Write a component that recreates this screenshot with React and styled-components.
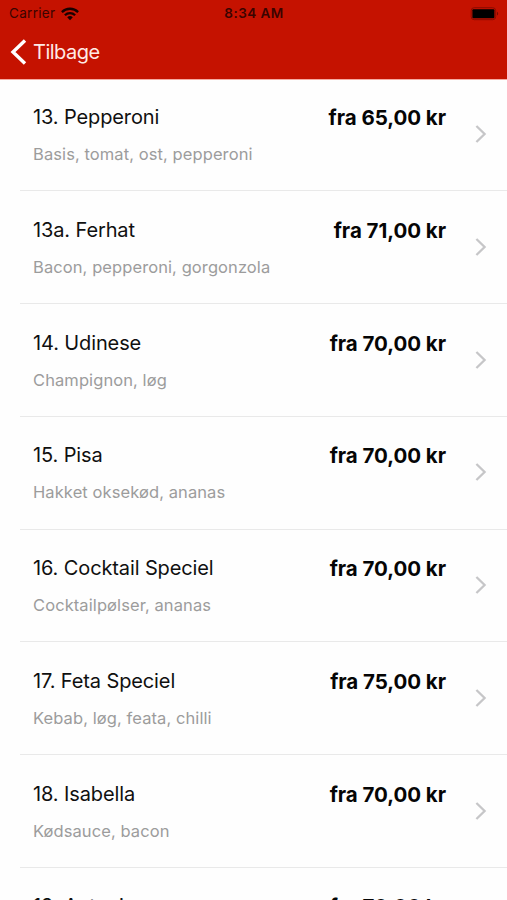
import React from "react";
import styled, { createGlobalStyle } from "styled-components";

const GlobalStyle = createGlobalStyle`
  html, body { margin: 0; height: 100%; overflow: hidden; background: #fff; }
  *, *::before, *::after { box-sizing: border-box; }
`;

const Screen = styled.div`
  width: 100%;
  height: 900px;
  overflow: hidden;
  background: #fefefe;
  color: #101010;
  font-family: Inter, "Liberation Sans", sans-serif;
`;

const Header = styled.header`
  height: 80px;
  background: #c51200;
  border-bottom: 1px solid #f6aaa2;
`;

const StatusBar = styled.div`
  height: 27px;
  padding: 0 8px 0 9px;
  display: grid;
  grid-template-columns: 1fr auto 1fr;
  align-items: center;
  color: #3a0400;
  font-size: 13.5px;
  line-height: 27px;
`;

const Carrier = styled.div`
  display: flex;
  align-items: center;
  gap: 6px;
  letter-spacing: 0.3px;
`;

const Clock = styled.div`
  font-weight: 600;
  letter-spacing: 0.45px;
`;

const BatterySlot = styled.div`
  display: flex;
  justify-content: flex-end;
`;

const BackButton = styled.button`
  height: 50px;
  padding: 0 10px;
  border: 0;
  background: none;
  display: flex;
  align-items: center;
  gap: 6px;
  color: #ffeae6;
  font: 400 20px/50px Inter, "Liberation Sans", sans-serif;
  letter-spacing: -0.5px;
`;

const List = styled.ul`
  margin: 0;
  padding: 0 0 0 20px;
  list-style: none;
`;

const Row = styled.li`
  height: 112.8px;
  padding: 24.7px 20px 0 13px;
  border-bottom: 1px solid #e9e9e9;
  display: flex;

  &:first-child {
    height: 111.2px;
    padding-top: 23.2px;
  }

  &:last-child {
    padding-top: 24px;
  }
`;

const Details = styled.div`
  flex: 1;
`;

const Title = styled.div`
  font-size: 20px;
  line-height: 28px;
  letter-spacing: -0.12px;
`;

const Ingredients = styled.div`
  margin-top: 11px;
  font-size: 16.5px;
  line-height: 24px;
  letter-spacing: 0.09px;
  color: #9c9c9c;
`;

const Price = styled.div`
  font-size: 20.5px;
  line-height: 30px;
  font-weight: 700;
  letter-spacing: -0.04px;
  color: #050505;
`;

const Disclosure = styled.div`
  margin: 21px 0 0 29px;
  height: 20px;
`;

const items = [
  ["13. Pepperoni", "Basis, tomat, ost, pepperoni", "fra 65,00 kr"],
  ["13a. Ferhat", "Bacon, pepperoni, gorgonzola", "fra 71,00 kr"],
  ["14. Udinese", "Champignon, løg", "fra 70,00 kr"],
  ["15. Pisa", "Hakket oksekød, ananas", "fra 70,00 kr"],
  ["16. Cocktail Speciel", "Cocktailpølser, ananas", "fra 70,00 kr"],
  ["17. Feta Speciel", "Kebab, løg, feata, chilli", "fra 75,00 kr"],
  ["18. Isabella", "Kødsauce, bacon", "fra 70,00 kr"],
  ["19. Antonio", "", "fra 70,00 kr"],
];

const WifiIcon = () => (
  <svg width="18" height="14" viewBox="0 0 18 14" fill="none" stroke="#180100" strokeWidth="2.3">
    <path d="M0.9 5.1a11.5 11.5 0 0 1 16.2 0" />
    <path d="M3.9 8.2a7.2 7.2 0 0 1 10.2 0" />
    <path d="M6.2 10.3a4 4 0 0 1 5.6 0L9 13.2z" fill="#180100" stroke="none" />
  </svg>
);

const BatteryIcon = () => (
  <svg width="29" height="14" viewBox="0 0 29 14">
    <rect x="1.2" y="0.7" width="24.5" height="12" rx="3" fill="none" stroke="#8b0c00" />
    <rect x="2.4" y="2.3" width="22" height="8.9" rx="1" fill="#000" />
    <path d="M27 4.8c1.6.6 1.6 3.2 0 3.8z" fill="#780a00" />
  </svg>
);

export default function App() {
  return (
    <>
      <GlobalStyle />
      <Screen>
        <Header>
          <StatusBar>
            <Carrier>Carrier <WifiIcon /></Carrier>
            <Clock>8:34 AM</Clock>
            <BatterySlot><BatteryIcon /></BatterySlot>
          </StatusBar>
          <BackButton>
            <svg width="17" height="26" viewBox="0 0 17 26" fill="none" stroke="#fff" strokeWidth="3.4">
              <path d="M15 1.5L3 13l12 11.5" />
            </svg>
            Tilbage
          </BackButton>
        </Header>
        <List>
          {items.map(([title, ingredients, price]) => (
            <Row key={title}>
              <Details>
                <Title>{title}</Title>
                <Ingredients>{ingredients}</Ingredients>
              </Details>
              <Price>{price}</Price>
              <Disclosure>
                <svg width="12" height="20" viewBox="0 0 12 20" fill="none" stroke="#c6c6c8" strokeWidth="2.3">
                  <path d="M1.4 2l8.2 8-8.2 8" />
                </svg>
              </Disclosure>
            </Row>
          ))}
        </List>
      </Screen>
    </>
  );
}
